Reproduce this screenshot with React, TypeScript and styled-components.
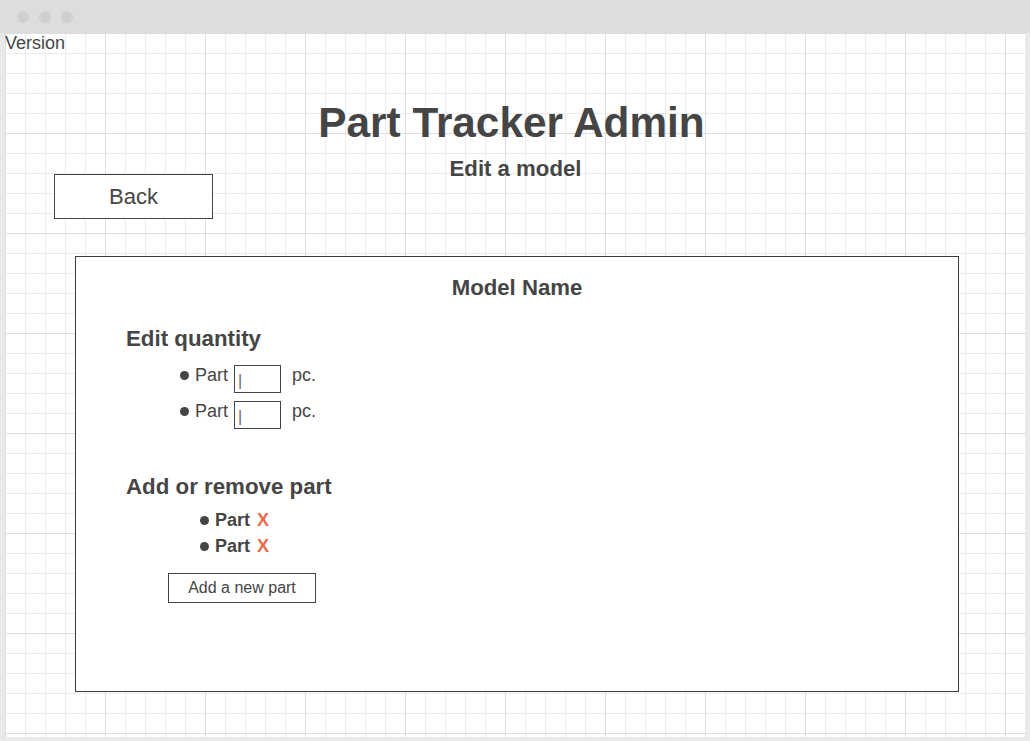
import React from "react";
import styled, { createGlobalStyle } from "styled-components";

const GlobalStyle = createGlobalStyle`
  html, body { margin: 0; padding: 0; }
  body {
    font-family: "Liberation Sans", Arial, sans-serif;
    color: #454545;
    background: #ffffff;
  }
  * { box-sizing: border-box; }
`;

const Window = styled.div`
  width: 1030px;
  height: 741px;
  display: flex;
  flex-direction: column;
  background: #e9e9e9;
  padding: 0 4px 4px 5px;
  overflow: hidden;
`;

const TitleBar = styled.div`
  height: 33px;
  margin: 0 -4px 0 -5px;
  background: #dddddd;
  display: flex;
  align-items: center;
  gap: 10px;
  padding-left: 17px;
`;

const Dot = styled.span`
  width: 12px;
  height: 12px;
  border-radius: 50%;
  background: #cfcfcf;
`;

const Canvas = styled.div`
  flex: 1;
  display: flex;
  flex-direction: column;
  background-color: #ffffff;
  background-image:
    linear-gradient(to right, #dedede 1px, transparent 1px),
    linear-gradient(to bottom, #dedede 1px, transparent 1px),
    linear-gradient(to right, #ececec 1px, transparent 1px),
    linear-gradient(to bottom, #ececec 1px, transparent 1px);
  background-size: 100px 100px, 100px 100px, 20px 20px, 20px 20px;
`;

const Version = styled.div`
  font-size: 18px;
  line-height: 20px;
  height: 20px;
`;

const Title = styled.h1`
  margin: 49px 0 0;
  padding-right: 8px;
  text-align: center;
  font-size: 42.3px;
  line-height: 42px;
  font-weight: bold;
`;

const SubRow = styled.div`
  margin-top: 14px;
  display: grid;
  grid-template-columns: 1fr auto 1fr;
  align-items: start;
`;

const Subtitle = styled.h2`
  margin: 0;
  font-size: 22.2px;
  line-height: 22px;
  font-weight: bold;
  text-align: center;
`;

const BackButton = styled.button`
  justify-self: start;
  margin: 16px 0 0 49px;
  width: 159px;
  height: 45px;
  background: #ffffff;
  border: 1px solid #444444;
  font-family: inherit;
  font-size: 22px;
  color: #454545;
  padding: 0;
`;

const Panel = styled.section`
  margin: 37px 0 0 70px;
  width: 884px;
  height: 436px;
  border: 1px solid #3a3a3a;
  background: #ffffff;
  padding: 20px 0 0 50px;
  display: flex;
  flex-direction: column;
`;

const PanelTitle = styled.h3`
  margin: 0 0 0 -50px;
  font-size: 22.2px;
  line-height: 22px;
  font-weight: bold;
  text-align: center;
`;

const SectionHeading = styled.h4<{ $top: number }>`
  margin: ${(p) => p.$top}px 0 0;
  font-size: 22.3px;
  line-height: 22px;
  font-weight: bold;
`;

const QtyList = styled.ul`
  list-style: none;
  margin: 15px 0 0;
  padding: 0 0 0 54px;
  display: flex;
  flex-direction: column;
  gap: 8px;
`;

const QtyRow = styled.li`
  display: flex;
  align-items: flex-start;
  height: 28px;
`;

const Label = styled.span<{ $bold?: boolean; $lh: number }>`
  display: inline-flex;
  align-items: center;
  font-size: 18px;
  line-height: ${(p) => p.$lh}px;
  font-weight: ${(p) => (p.$bold ? "bold" : "normal")};
  &::before {
    content: "";
    width: 9px;
    height: 9px;
    border-radius: 50%;
    background: #454545;
    margin-right: 6px;
  }
`;

const QtyLabel = styled(Label)`
  margin-top: 1px;
`;

const QtyBox = styled.div`
  width: 47px;
  height: 28px;
  margin-left: 6px;
  border: 1px solid #444444;
  display: flex;
  align-items: center;
  padding: 3px 0 0 3px;
  font-size: 16px;
  line-height: 1;
  color: #6a6a6a;
`;

const Unit = styled.span`
  margin: 1px 0 0 11px;
  font-size: 18px;
  line-height: 18px;
`;

const PartList = styled.ul`
  list-style: none;
  margin: 9px 0 0;
  padding: 0 0 0 74px;
`;

const PartRow = styled.li`
  display: flex;
  align-items: center;
  gap: 7px;
  height: 26px;
`;

const Remove = styled.span`
  color: #ec6a4a;
  font-size: 18px;
  font-weight: bold;
  line-height: 26px;
`;

const AddButton = styled.button`
  align-self: flex-start;
  margin: 14px 0 0 42px;
  width: 148px;
  height: 30px;
  background: #ffffff;
  border: 1px solid #444444;
  font-family: inherit;
  font-size: 16px;
  color: #454545;
  padding: 0;
`;

export default function App() {
  const qtyParts = ["Part", "Part"];
  const parts = ["Part", "Part"];
  return (
    <>
      <GlobalStyle />
      <Window>
        <TitleBar>
          <Dot />
          <Dot />
          <Dot />
        </TitleBar>
        <Canvas>
          <Version>Version</Version>
          <Title>Part Tracker Admin</Title>
          <SubRow>
            <BackButton>Back</BackButton>
            <Subtitle>Edit a model</Subtitle>
            <div />
          </SubRow>
          <Panel>
            <PanelTitle>Model Name</PanelTitle>
            <SectionHeading $top={29}>Edit quantity</SectionHeading>
            <QtyList>
              {qtyParts.map((p, i) => (
                <QtyRow key={i}>
                  <QtyLabel $lh={18}>{p}</QtyLabel>
                  <QtyBox>|</QtyBox>
                  <Unit>pc.</Unit>
                </QtyRow>
              ))}
            </QtyList>
            <SectionHeading $top={47}>Add or remove part</SectionHeading>
            <PartList>
              {parts.map((p, i) => (
                <PartRow key={i}>
                  <Label $bold $lh={26}>{p}</Label>
                  <Remove>X</Remove>
                </PartRow>
              ))}
            </PartList>
            <AddButton>Add a new part</AddButton>
          </Panel>
        </Canvas>
      </Window>
    </>
  );
}
